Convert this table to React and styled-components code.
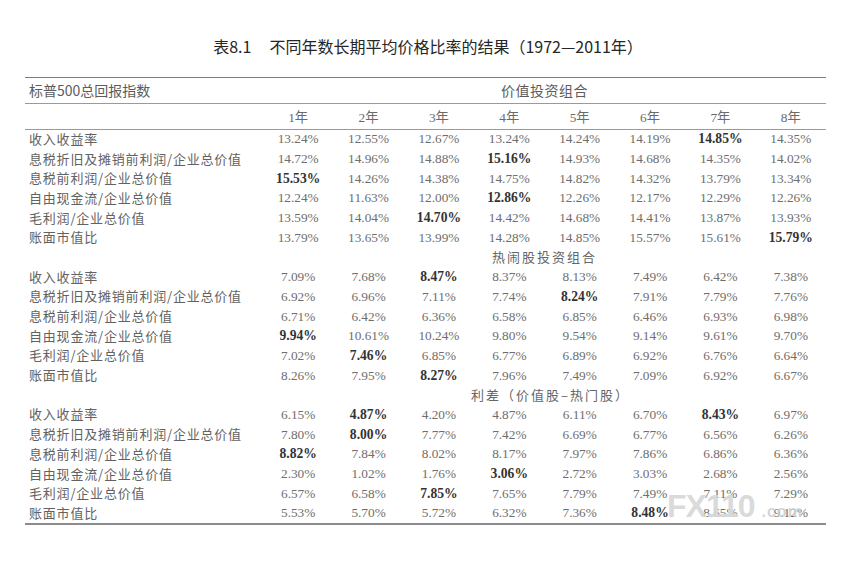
import React from "react";
import styled, { createGlobalStyle } from "styled-components";

const Global = createGlobalStyle`
  html, body { margin: 0; padding: 0; background: #ffffff; }
  body { width: 849px; height: 564px; overflow: hidden; }
`;

const Page = styled.div`
  width: 849px;
  height: 564px;
  padding-top: 36px;
  box-sizing: border-box;
  background: #fff;
`;

const Title = styled.h1`
  margin: 0 0 20.5px 0;
  height: 20px;
  line-height: 20px;
  text-align: center;
  padding-left: 7px;
  font-family: "Noto Sans CJK SC", "Noto Sans", sans-serif;
  font-weight: 400;
  font-size: 16px;
  color: #262626;
`;

const TitleGap = styled.span`
  display: inline-block;
  width: 18px;
`;

const Table = styled.div`
  position: relative;
  margin-left: 25px;
  width: 801px;
  border-top: 1.5px solid #7c7c7c;
  border-bottom: 2px solid #8c8c8c;
`;

const Row = styled.div`
  display: grid;
  grid-template-columns: 238px repeat(8, 1fr);
  align-items: center;
  height: ${(p) => p.$h}px;
  border-bottom: ${(p) => (p.$rule ? "1px solid #9a9a9a" : "none")};
`;

const IndexLabel = styled.div`
  padding-left: 4px;
  font-family: "Noto Sans CJK SC", "Noto Sans", sans-serif;
  font-size: 14px;
  color: #5c5c5c;
  white-space: nowrap;
`;

const SpanHead = styled.div`
  grid-column: 2 / span 8;
  text-align: center;
  font-family: "Noto Sans CJK SC", "Noto Sans", sans-serif;
  font-size: ${(p) => (p.$sans ? 14 : 13)}px;
  line-height: 1;
  letter-spacing: ${(p) => (p.$sans ? 0.5 : 2)}px;
  color: ${(p) => (p.$sans ? "#5c5c5c" : "#666")};
  white-space: nowrap;
  padding-left: ${(p) => p.$shift || 0}px;
  margin-top: ${(p) => (p.$sans ? 0 : -2)}px;
`;

const Label = styled.div`
  padding-left: 4px;
  margin-top: -2px;
  font-family: "Noto Sans CJK SC", "Noto Sans", sans-serif;
  font-size: 13px;
  line-height: 1;
  letter-spacing: 0.8px;
  color: #626262;
  white-space: nowrap;
`;

const Cell = styled.div`
  text-align: center;
  font-family: "Liberation Serif", "Noto Sans CJK SC", serif;
  font-size: ${(p) => (p.$bold ? 13.6 : 13.3)}px;
  font-weight: ${(p) => (p.$bold ? 700 : 400)};
  color: ${(p) => (p.$bold ? "#333" : "#6e6e6e")};
  white-space: nowrap;
`;

const YearCell = styled(Cell)`
  color: #6a6a6a;
`;

const Watermark = styled.div`
  position: absolute;
  left: 642px;
  top: 412px;
  display: flex;
  align-items: baseline;
  gap: 7px;
  pointer-events: none;
  color: rgba(216, 216, 216, 0.94);
  font-family: "Liberation Sans", Arial, sans-serif;
  white-space: nowrap;
`;

const WmMain = styled.span`
  font-size: 32px;
  font-weight: 700;
  letter-spacing: -1px;
  line-height: 1;
`;

const WmSub = styled.span`
  font-size: 16px;
  font-weight: 700;
  letter-spacing: 1px;
  color: rgba(208, 208, 208, 0.9);
`;

const labels = [
  "收入收益率",
  "息税折旧及摊销前利润/企业总价值",
  "息税前利润/企业总价值",
  "自由现金流/企业总价值",
  "毛利润/企业总价值",
  "账面市值比",
];

const sections = [
  {
    head: null,
    rows: [
      ["13.24", "12.55", "12.67", "13.24", "14.24", "14.19", "*14.85", "14.35"],
      ["14.72", "14.96", "14.88", "*15.16", "14.93", "14.68", "14.35", "14.02"],
      ["*15.53", "14.26", "14.38", "14.75", "14.82", "14.32", "13.79", "13.34"],
      ["12.24", "11.63", "12.00", "*12.86", "12.26", "12.17", "12.29", "12.26"],
      ["13.59", "14.04", "*14.70", "14.42", "14.68", "14.41", "13.87", "13.93"],
      ["13.79", "13.65", "13.99", "14.28", "14.85", "15.57", "15.61", "*15.79"],
    ],
  },
  {
    head: "热闹股投资组合",
    shift: 0,
    rows: [
      ["7.09", "7.68", "*8.47", "8.37", "8.13", "7.49", "6.42", "7.38"],
      ["6.92", "6.96", "7.11", "7.74", "*8.24", "7.91", "7.79", "7.76"],
      ["6.71", "6.42", "6.36", "6.58", "6.85", "6.46", "6.93", "6.98"],
      ["*9.94", "10.61", "10.24", "9.80", "9.54", "9.14", "9.61", "9.70"],
      ["7.02", "*7.46", "6.85", "6.77", "6.89", "6.92", "6.76", "6.64"],
      ["8.26", "7.95", "*8.27", "7.96", "7.49", "7.09", "6.92", "6.67"],
    ],
  },
  {
    head: "利差（价值股–热门股）",
    shift: 12,
    rows: [
      ["6.15", "*4.87", "4.20", "4.87", "6.11", "6.70", "*8.43", "6.97"],
      ["7.80", "*8.00", "7.77", "7.42", "6.69", "6.77", "6.56", "6.26"],
      ["*8.82", "7.84", "8.02", "8.17", "7.97", "7.86", "6.86", "6.36"],
      ["2.30", "1.02", "1.76", "*3.06", "2.72", "3.03", "2.68", "2.56"],
      ["6.57", "6.58", "*7.85", "7.65", "7.79", "7.49", "7.11", "7.29"],
      ["5.53", "5.70", "5.72", "6.32", "7.36", "*8.48", "8.65", "9.12"],
    ],
  },
];

const years = ["1年", "2年", "3年", "4年", "5年", "6年", "7年", "8年"];
const RH = 19.7;

export default function App() {
  return (
    <>
      <Global />
      <Page>
        <Title>
          表8.1<TitleGap />不同年数长期平均价格比率的结果（1972—2011年）
        </Title>
        <Table>
          <Row $h={25} $rule>
            <IndexLabel>标普500总回报指数</IndexLabel>
            <SpanHead $sans>价值投资组合</SpanHead>
          </Row>
          <Row $h={25} $rule>
            <div />
            {years.map((y) => (
              <YearCell key={y}>{y}</YearCell>
            ))}
          </Row>
          {sections.map((s, si) => (
            <React.Fragment key={si}>
              {s.head && (
                <Row $h={RH}>
                  <div />
                  <SpanHead $shift={s.shift}>{s.head}</SpanHead>
                </Row>
              )}
              {s.rows.map((r, ri) => (
                <Row $h={RH} key={ri}>
                  <Label>{labels[ri]}</Label>
                  {r.map((v, ci) => {
                    const bold = v.startsWith("*");
                    return (
                      <Cell key={ci} $bold={bold}>
                        {(bold ? v.slice(1) : v) + "%"}
                      </Cell>
                    );
                  })}
                </Row>
              ))}
            </React.Fragment>
          ))}
          <Watermark>
            <WmMain>FX110</WmMain>
            <WmSub>.com</WmSub>
          </Watermark>
        </Table>
      </Page>
    </>
  );
}
